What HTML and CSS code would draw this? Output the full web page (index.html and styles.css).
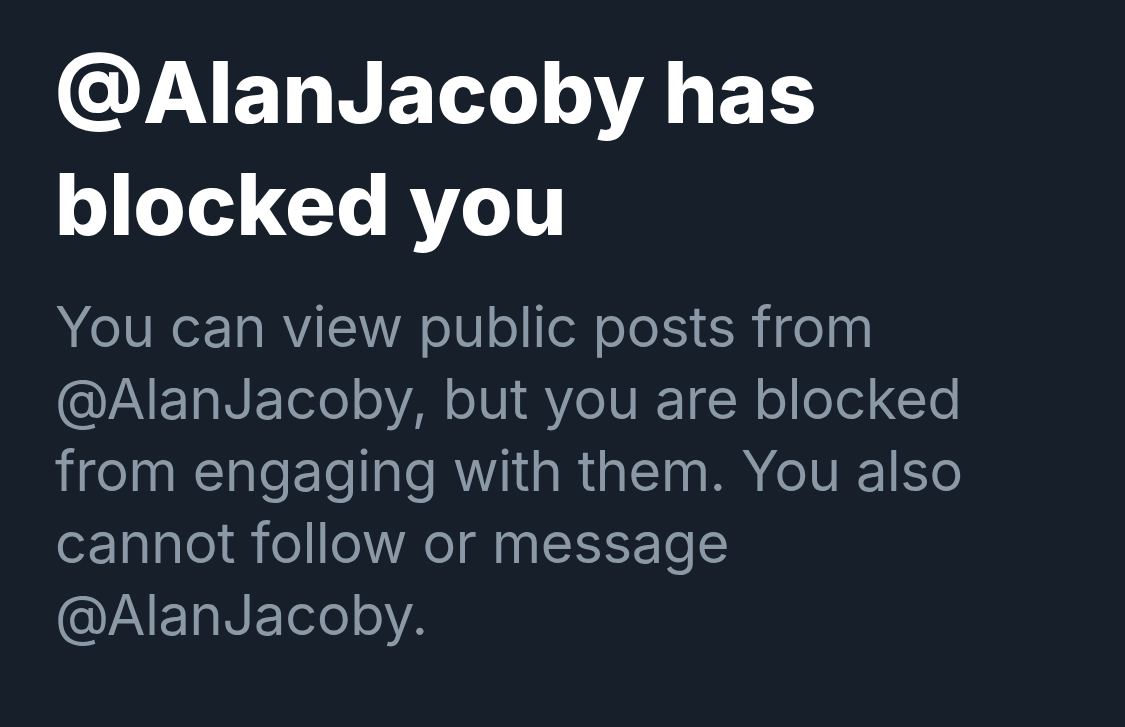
FILE: index.html
```html
<!DOCTYPE html>
<html lang="en">
<head>
  <meta charset="UTF-8" />
  <meta name="viewport" content="width=device-width, initial-scale=1.0"/>
  <title>Blocked</title>
  <link rel="stylesheet" href="styles.css">
</head>
<body>

  <div class="notice">
    <h1>@AlanJacoby has blocked you</h1>
    <p>You can view public posts from @AlanJacoby, but you are blocked from engaging with them. You also cannot follow or message @AlanJacoby.</p>
  </div>

</body>
</html>
```

FILE: styles.css
```css
body {
  background-color: #171f2a;
  font-family: 'Inter', 'Liberation Sans', sans-serif;
  margin: 0;
  height: 727px;
  overflow: hidden;
}
.notice {
  padding: 37px 0 0 55px;
  width: 990px;
}
h1 {
  margin: 0;
  color: #ffffff;
  font-size: 85px;
  font-weight: 800;
  line-height: 112px;
  letter-spacing: 0;
}
p {
  margin: 30px 0 0;
  color: #8b98a5;
  font-size: 56px;
  line-height: 72px;
  font-weight: 400;
  letter-spacing: -0.3px;
}
```
